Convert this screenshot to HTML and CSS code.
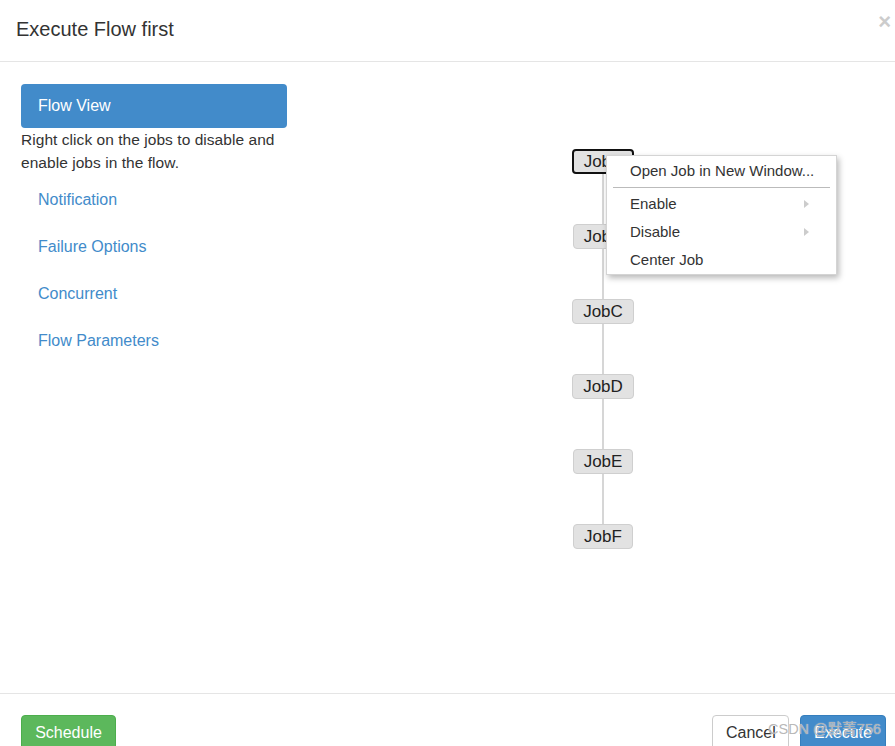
FILE: index.html
```html
<!DOCTYPE html>
<html>
<head>
<meta charset="utf-8">
<link rel="stylesheet" href="styles.css">
</head>
<body>
<div class="modal">
  <div class="modal-header">
    <h4 class="modal-title">Execute Flow first</h4>
    <span class="close">&times;</span>
  </div>
  <div class="modal-body">
    <div class="sidebar">
      <div class="pill active">Flow View</div>
      <p class="hint">Right click on the jobs to disable and enable jobs in the flow.</p>
      <a class="pill link">Notification</a>
      <a class="pill link">Failure Options</a>
      <a class="pill link">Concurrent</a>
      <a class="pill link">Flow Parameters</a>
    </div>
    <div class="graph">
      <div class="node selected">JobA</div>
      <div class="edge"></div>
      <div class="node">JobB</div>
      <div class="edge"></div>
      <div class="node">JobC</div>
      <div class="edge"></div>
      <div class="node">JobD</div>
      <div class="edge"></div>
      <div class="node">JobE</div>
      <div class="edge"></div>
      <div class="node">JobF</div>
    </div>
  </div>
  <div class="modal-footer">
    <button class="btn btn-success">Schedule</button>
    <div class="spacer"></div>
    <button class="btn btn-default">Cancel</button>
    <button class="btn btn-primary">Execute</button>
  </div>
  <ul class="context-menu">
    <li class="item">Open Job in New Window...</li>
    <li class="divider"></li>
    <li class="item sub">Enable<span class="caret-right"></span></li>
    <li class="item sub">Disable<span class="caret-right"></span></li>
    <li class="item">Center Job</li>
  </ul>
  <div class="watermark">CSDN @默菁756</div>
</div>
</body>
</html>
```
FILE: styles.css
```css
* { box-sizing: border-box; }
html, body {
  margin: 0;
  padding: 0;
  background: #fff;
}
body {
  font-family: "Liberation Sans", Arial, "Noto Sans CJK SC", sans-serif;
  color: #333;
  font-size: 15px;
  overflow: hidden;
}
.modal {
  position: relative;
  width: 895px;
  height: 746px;
  display: flex;
  flex-direction: column;
  overflow: hidden;
}
.modal-header {
  flex: 0 0 62px;
  border-bottom: 1px solid #e5e5e5;
  display: flex;
  align-items: flex-start;
  padding: 0 0 0 16px;
}
.modal-title {
  margin: 17px 0 0 0;
  font-size: 20px;
  font-weight: normal;
  line-height: 24px;
  color: #333;
}
.close {
  margin-left: auto;
  margin-top: 9px;
  margin-right: 4px;
  font-size: 22px;
  font-weight: bold;
  color: #ccc;
  line-height: 26px;
}
.modal-body {
  flex: 0 0 631px;
  display: flex;
  padding: 22px 0 0 21px;
}
.sidebar {
  width: 266px;
  display: flex;
  flex-direction: column;
}
.pill {
  display: block;
  height: 44px;
  line-height: 44px;
  padding: 0 17px;
  border-radius: 4px;
  font-size: 16px;
}
.pill.active {
  background: #428bca;
  color: #fff;
}
.pill.link {
  color: #428bca;
  height: 47px;
  line-height: 47px;
}
.hint {
  margin: 0;
  padding-top: 0;
  font-size: 15.5px;
  line-height: 23px;
  color: #333;
  height: 48px;
  letter-spacing: 0.05px;
}
.graph {
  margin-left: 276px;
  padding-top: 65px;
  width: 80px;
  display: flex;
  flex-direction: column;
  align-items: center;
}
.node {
  height: 25px;
  line-height: 23px;
  padding: 0 10px;
  background: #e2e2e2;
  border: 1px solid #cfcfcf;
  border-radius: 4px;
  font-size: 17px;
  color: #222;
}
.node.selected {
  border: 2px solid #111;
  line-height: 21px;
}
.edge {
  width: 2px;
  height: 50px;
  background: #d6d6d6;
}
.modal-footer {
  flex: 1 1 auto;
  border-top: 1px solid #e5e5e5;
  display: flex;
  align-items: flex-start;
  padding: 21px 9px 0 21px;
}
.spacer { flex: 1; }
.btn {
  height: 44px;
  padding: 0 13px 8px;
  font-family: inherit;
  font-size: 16px;
  border-radius: 4px;
  border: 1px solid transparent;
  line-height: 20px;
}
.btn-success {
  width: 95px;
  background: #5cb85c;
  border-color: #4cae4c;
  color: #fff;
}
.btn-default {
  width: 77px;
  background: #fff;
  border-color: #ccc;
  color: #333;
  margin-right: 11px;
}
.btn-primary {
  width: 86px;
  background: #428bca;
  border-color: #357ebd;
  color: #fff;
}
.context-menu {
  position: absolute;
  left: 606px;
  top: 155px;
  width: 231px;
  margin: 0;
  padding: 1px 0 0;
  list-style: none;
  background: #fff;
  border: 1px solid #d4d4d4;
  box-shadow: 2px 3px 6px rgba(0, 0, 0, 0.28);
}
.context-menu .item {
  height: 28px;
  line-height: 28px;
  padding: 0 0 0 23px;
  font-size: 15px;
  color: #333;
  position: relative;
}
.context-menu .divider {
  height: 1px;
  margin: 2px 6px 2px 6px;
  background: #bbb;
}
.caret-right {
  position: absolute;
  left: 197px;
  top: 10px;
  width: 0;
  height: 0;
  border-top: 4px solid transparent;
  border-bottom: 4px solid transparent;
  border-left: 5px solid #ccc;
}
.watermark {
  position: absolute;
  left: 768px;
  top: 717px;
  font-size: 14.5px;
  color: rgba(175, 175, 175, 0.9);
  text-shadow: 0 0 1px rgba(255, 255, 255, 0.8);
  white-space: nowrap;
}
```
